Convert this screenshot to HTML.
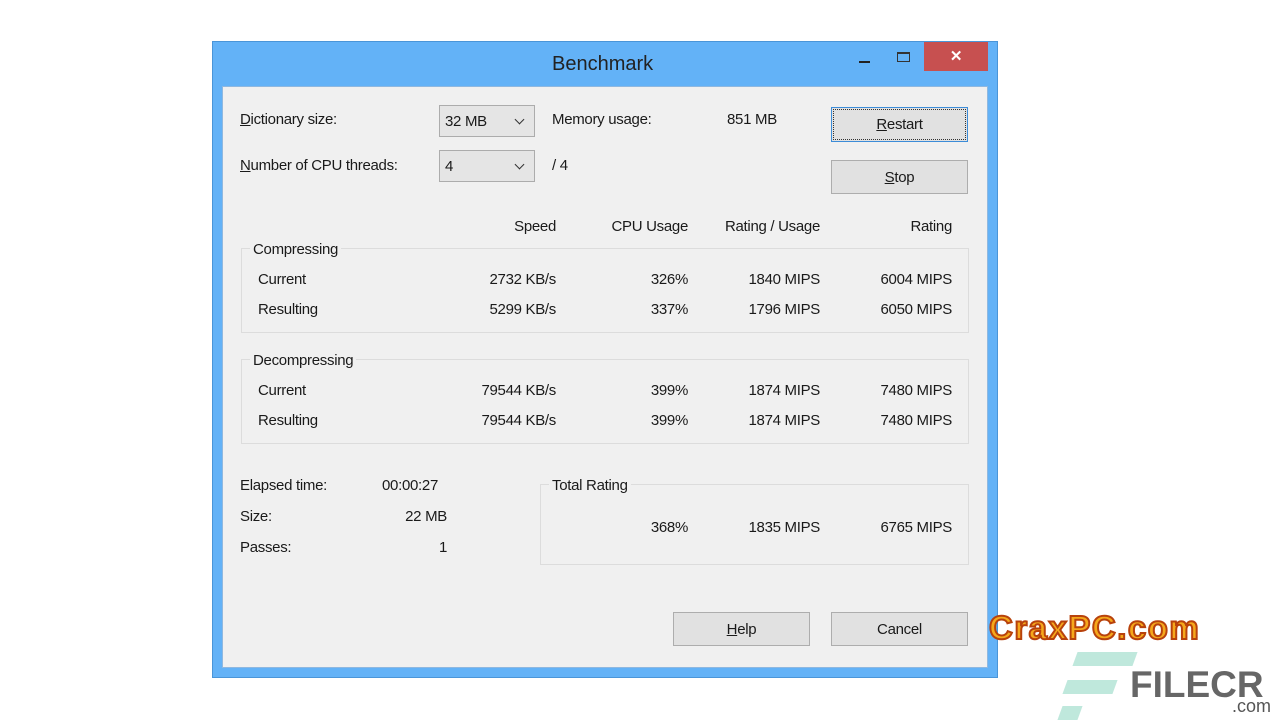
<!DOCTYPE html><html><head><style>
body{margin:0;width:1280px;height:720px;background:#fff;position:relative;overflow:hidden;font-family:"Liberation Sans",sans-serif;font-size:15px;color:#1a1a1a;letter-spacing:-0.3px}
.a{position:absolute;white-space:nowrap}
.r{text-align:right}
.win{position:absolute;left:212px;top:41px;width:786px;height:637px;background:#63b2f7;box-sizing:border-box;border:1px solid #4a95d8}
.cl{position:absolute;left:222px;top:86px;width:766px;height:582px;background:#f0f0f0;border:1px solid #8fb8e0;box-sizing:border-box}
.btn{position:absolute;background:#e1e1e1;border:1px solid #adadad;box-sizing:border-box;text-align:center;line-height:34px}
.cb{position:absolute;background:#e5e5e5;border:1px solid #acacac;box-sizing:border-box;height:32px;line-height:32px;padding-left:5px}
.cb:after{content:"";position:absolute;right:11px;top:10px;width:6px;height:6px;border-right:1.5px solid #333;border-bottom:1.5px solid #333;transform:rotate(45deg)}
.g{position:absolute;border:1px solid #dcdcdc;box-sizing:border-box}
u{text-decoration:underline}
</style></head><body>
<div class="win"></div>
<div class="a" style="left:552px;top:53px;font-size:20px;color:#222;letter-spacing:0">Benchmark</div>
<div class="a" style="left:859px;top:61px;width:11px;height:2px;background:#222"></div>
<div class="a" style="left:897px;top:52px;width:13px;height:10px;border:1px solid #333;border-top-width:2px;box-sizing:border-box"></div>
<div class="a" style="left:924px;top:42px;width:64px;height:29px;background:#c75050;color:#fff;text-align:center;font-size:15px;line-height:29px;font-weight:bold">✕</div>
<div class="cl"></div>
<div class="a" style="left:240px;top:111px"><u>D</u>ictionary size:</div>
<div class="cb" style="left:439px;top:105px;width:96px">32 MB</div>
<div class="a" style="left:552px;top:111px">Memory usage:</div>
<div class="a" style="left:727px;top:111px">851 MB</div>
<div class="a" style="left:240px;top:157px"><u>N</u>umber of CPU threads:</div>
<div class="cb" style="left:439px;top:150px;width:96px">4</div>
<div class="a" style="left:552px;top:157px">/ 4</div>
<div class="btn" style="left:831px;top:107px;width:137px;height:35px;border:1px solid #3c8cd8;outline:1px dotted #333;outline-offset:-3px"><u>R</u>estart</div>
<div class="btn" style="left:831px;top:160px;width:137px;height:34px"><u>S</u>top</div>
<div class="a r" style="left:456px;top:218px;width:100px">Speed</div>
<div class="a r" style="left:588px;top:218px;width:100px">CPU Usage</div>
<div class="a r" style="left:700px;top:218px;width:120px">Rating / Usage</div>
<div class="a r" style="left:852px;top:218px;width:100px">Rating</div>
<div class="g" style="left:241px;top:248px;width:728px;height:85px"></div>
<div class="a" style="left:250px;top:241px;background:#f0f0f0;padding:0 3px">Compressing</div>
<div class="g" style="left:241px;top:359px;width:728px;height:85px"></div>
<div class="a" style="left:250px;top:352px;background:#f0f0f0;padding:0 3px">Decompressing</div>
<div class="a" style="left:258px;top:271px">Current</div>
<div class="a" style="left:258px;top:301px">Resulting</div>
<div class="a r" style="left:436px;top:271px;width:120px">2732 KB/s</div>
<div class="a r" style="left:436px;top:301px;width:120px">5299 KB/s</div>
<div class="a r" style="left:588px;top:271px;width:100px">326%</div>
<div class="a r" style="left:588px;top:301px;width:100px">337%</div>
<div class="a r" style="left:700px;top:271px;width:120px">1840 MIPS</div>
<div class="a r" style="left:700px;top:301px;width:120px">1796 MIPS</div>
<div class="a r" style="left:832px;top:271px;width:120px">6004 MIPS</div>
<div class="a r" style="left:832px;top:301px;width:120px">6050 MIPS</div>
<div class="a" style="left:258px;top:382px">Current</div>
<div class="a" style="left:258px;top:412px">Resulting</div>
<div class="a r" style="left:436px;top:382px;width:120px">79544 KB/s</div>
<div class="a r" style="left:436px;top:412px;width:120px">79544 KB/s</div>
<div class="a r" style="left:588px;top:382px;width:100px">399%</div>
<div class="a r" style="left:588px;top:412px;width:100px">399%</div>
<div class="a r" style="left:700px;top:382px;width:120px">1874 MIPS</div>
<div class="a r" style="left:700px;top:412px;width:120px">1874 MIPS</div>
<div class="a r" style="left:832px;top:382px;width:120px">7480 MIPS</div>
<div class="a r" style="left:832px;top:412px;width:120px">7480 MIPS</div>
<div class="a" style="left:240px;top:477px">Elapsed time:</div>
<div class="a" style="left:382px;top:477px">00:00:27</div>
<div class="a" style="left:240px;top:508px">Size:</div>
<div class="a r" style="left:347px;top:508px;width:100px">22 MB</div>
<div class="a" style="left:240px;top:539px">Passes:</div>
<div class="a r" style="left:347px;top:539px;width:100px">1</div>
<div class="g" style="left:540px;top:484px;width:429px;height:81px"></div>
<div class="a" style="left:549px;top:477px;background:#f0f0f0;padding:0 3px">Total Rating</div>
<div class="a r" style="left:588px;top:519px;width:100px">368%</div>
<div class="a r" style="left:700px;top:519px;width:120px">1835 MIPS</div>
<div class="a r" style="left:832px;top:519px;width:120px">6765 MIPS</div>
<div class="btn" style="left:673px;top:612px;width:137px;height:34px"><u>H</u>elp</div>
<div class="btn" style="left:831px;top:612px;width:137px;height:34px">Cancel</div>
<div class="a" style="left:989px;top:609px;font-size:33px;font-weight:bold;color:#f5a81c;-webkit-text-stroke:2px #b8420c;letter-spacing:1.5px">CraxPC.com</div>
<div class="a" style="left:1075px;top:652px;width:60px;height:14px;background:#bfe8dc;transform:skewX(-20deg)"></div>
<div class="a" style="left:1065px;top:680px;width:50px;height:14px;background:#bfe8dc;transform:skewX(-20deg)"></div>
<div class="a" style="left:1060px;top:706px;width:20px;height:14px;background:#bfe8dc;transform:skewX(-20deg)"></div>
<div class="a" style="left:1130px;top:664px;font-size:37px;font-weight:bold;color:#666;letter-spacing:0">FILECR</div>
<div class="a" style="left:1232px;top:696px;font-size:18px;color:#555;letter-spacing:0">.com</div>
</body></html>
